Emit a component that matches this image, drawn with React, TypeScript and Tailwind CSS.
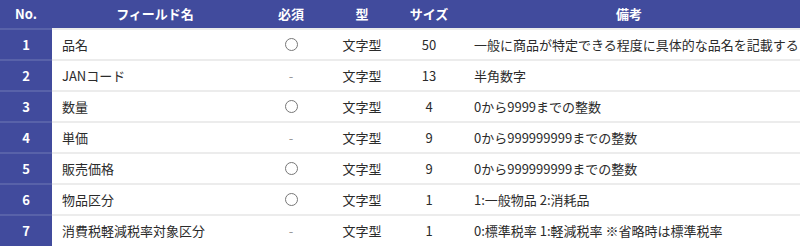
const rows = [
  { no: "1", name: "品名", req: true, type: "文字型", size: "50", note: "一般に商品が特定できる程度に具体的な品名を記載する" },
  { no: "2", name: "JANコード", req: false, type: "文字型", size: "13", note: "半角数字" },
  { no: "3", name: "数量", req: true, type: "文字型", size: "4", note: "0から9999までの整数" },
  { no: "4", name: "単価", req: false, type: "文字型", size: "9", note: "0から999999999までの整数" },
  { no: "5", name: "販売価格", req: true, type: "文字型", size: "9", note: "0から999999999までの整数" },
  { no: "6", name: "物品区分", req: true, type: "文字型", size: "1", note: "1:一般物品 2:消耗品" },
  { no: "7", name: "消費税軽減税率対象区分", req: false, type: "文字型", size: "1", note: "0:標準税率 1:軽減税率 ※省略時は標準税率" },
];

const App = () => {
  return (
    <div className="w-[800px] h-[250px] overflow-hidden bg-white font-['Noto_Sans_CJK_JP','Noto_Sans',sans-serif] text-[13px] text-[#2b2b2b]">
      <table className="w-[800px] table-fixed border-collapse">
        <colgroup>
          <col className="w-[52px]" />
          <col className="w-[206px]" />
          <col className="w-[66px]" />
          <col className="w-[76px]" />
          <col className="w-[58px]" />
          <col />
        </colgroup>
        <thead>
          <tr className="h-[29px] bg-[#414b9d] text-white font-bold">
            <th className="text-center">No.</th>
            <th className="text-center">フィールド名</th>
            <th className="text-center">必須</th>
            <th className="text-center">型</th>
            <th className="text-center">サイズ</th>
            <th className="text-center">備考</th>
          </tr>
        </thead>
        <tbody>
          {rows.map((r) => (
            <tr key={r.no} className="h-[31px]">
              <td className="bg-[#414b9d] text-white font-bold text-center border-t-2 border-[#5862a9]">{r.no}</td>
              <td className="pl-[10px] border-t-2 border-[#ececec] whitespace-nowrap">{r.name}</td>
              <td className="border-t-2 border-[#ececec]">
                <div className="flex justify-center">
                  {r.req ? (
                    <span className="block w-[13px] h-[13px] rounded-full border border-[#777]" />
                  ) : (
                    <span className="text-[#999]">-</span>
                  )}
                </div>
              </td>
              <td className="text-center border-t-2 border-[#ececec]">{r.type}</td>
              <td className="text-center border-t-2 border-[#ececec]">{r.size}</td>
              <td className="pl-[16px] border-t-2 border-[#ececec] whitespace-nowrap">{r.note}</td>
            </tr>
          ))}
        </tbody>
      </table>
    </div>
  );
};

export default App;
